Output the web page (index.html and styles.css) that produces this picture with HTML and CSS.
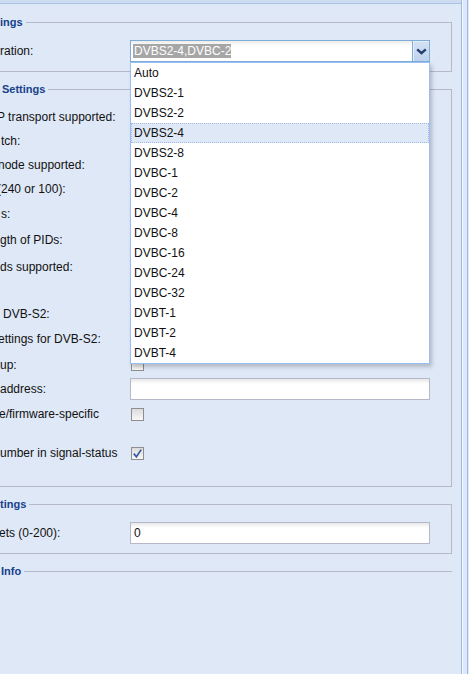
FILE: index.html
```html
<!DOCTYPE html>
<html>
<head>
<meta charset="utf-8">
<title>Settings</title>
<link rel="stylesheet" href="styles.css">
</head>
<body>
<div class="page">
  <div class="main">
    <div class="topbar"></div>

    <fieldset class="fs fs-first">
      <legend>ings</legend>
      <div class="row h22">
        <span class="lbl">ration:</span>
        <div class="combo">
          <div class="combo-input"><span class="sel">DVBS2-4,DVBC-2</span></div>
          <div class="trigger">
            <svg width="11" height="7" viewBox="0 0 11 7"><polyline points="1.2,1.3 5.5,5.2 9.8,1.3" fill="none" stroke="#263f72" stroke-width="2.4"/></svg>
          </div>
          <ul class="combo-list">
            <li>Auto</li>
            <li>DVBS2-1</li>
            <li>DVBS2-2</li>
            <li class="on">DVBS2-4</li>
            <li>DVBS2-8</li>
            <li>DVBC-1</li>
            <li>DVBC-2</li>
            <li>DVBC-4</li>
            <li>DVBC-8</li>
            <li>DVBC-16</li>
            <li>DVBC-24</li>
            <li>DVBC-32</li>
            <li>DVBT-1</li>
            <li>DVBT-2</li>
            <li>DVBT-4</li>
          </ul>
        </div>
      </div>
    </fieldset>

    <fieldset class="fs fs-big">
      <legend class="lg-pad">Settings</legend>
      <div class="row h24"><span class="lbl c3">P transport supported:</span></div>
      <div class="row h24"><span class="lbl p1">tch:</span></div>
      <div class="row h24"><span class="lbl c2">node supported:</span></div>
      <div class="row h24"><span class="lbl c3">(240 or 100):</span></div>
      <div class="row h26"><span class="lbl p1">s:</span></div>
      <div class="row h26"><span class="lbl">gth of PIDs:</span></div>
      <div class="row h28"><span class="lbl">ds supported:</span></div>
      <div class="spacer h20"></div>
      <div class="row h26"><span class="lbl p3">DVB-S2:</span></div>
      <div class="row h24"><span class="lbl c2">ettings for DVB-S2:</span></div>
      <div class="row h27"><span class="lbl">up:</span><span class="cb"></span></div>
      <div class="row h22"><span class="lbl">address:</span><div class="text"></div></div>
      <div class="row h28"><span class="lbl c1">e/firmware-specific</span><span class="cb"></span></div>
      <div class="spacer h12"></div>
      <div class="row h26"><span class="lbl">umber in signal-status</span><span class="cb">
        <svg width="11" height="11" viewBox="0 0 11 11"><polyline points="1.8,5.6 4.4,8.8 9.2,1.6" fill="none" stroke="#3a58a6" stroke-width="1.7"/></svg>
      </span></div>
    </fieldset>

    <fieldset class="fs">
      <legend>tings</legend>
      <div class="row h22">
        <span class="lbl c1">ets (0-200):</span>
        <div class="text">0</div>
      </div>
    </fieldset>

    <fieldset class="fs fs-collapsed">
      <legend class="lg-pad">Info</legend>
    </fieldset>
  </div>
  <div class="edge"></div>
</div>
</body>
</html>
```

FILE: styles.css
```css
html, body {
  margin: 0;
  padding: 0;
}
body {
  background: #dfe8f6;
  font-family: "Liberation Sans", Arial, sans-serif;
  font-size: 12px;
  color: #000;
  overflow: hidden;
}
.page {
  display: flex;
  width: 469px;
  height: 674px;
  overflow: hidden;
}
.main {
  width: 461px;
  flex: none;
  background: #dfe8f6;
}
.edge {
  width: 5px;
  flex: none;
  border-left: 1px solid #99bbe8;
  border-right: 1px solid #99bbe8;
  box-shadow: inset 1px 0 0 #f3f6fc;
  background: #dfe8f6;
}
.topbar {
  height: 3px;
  background: #cddcf1;
  border-bottom: 1px solid #a9c3e8;
}

/* fieldsets */
.fs {
  margin: 0 9px 10px -11px;
  padding: 11px 0 9px 10px;
  border: 1px solid #b5b8c8;
  min-width: 0;
}
.fs-first {
  margin-top: 11px;
}
.fs-big {
  padding-top: 9px;
  padding-bottom: 20px;
}
.fs-collapsed {
  border-width: 1px 0 0 0;
  padding: 0 0 0 10px;
}
.fs legend {
  font-family: "Liberation Sans", Arial, sans-serif;
  font-weight: bold;
  font-size: 11px;
  line-height: 14px;
  color: #15428b;
  padding: 0 3px 0 0;
  margin: 0;
}
.fs legend.lg-pad {
  padding-left: 2px;
}

/* rows */
.row {
  display: flex;
  align-items: center;
}
.h12 { height: 12px; }
.h20 { height: 20px; }
.h22 { height: 22px; }
.h24 { height: 24px; }
.h26 { height: 26px; }
.h27 { height: 27px; }
.h28 { height: 28px; }

.lbl {
  width: 130px;
  flex: none;
  white-space: nowrap;
  overflow: hidden;
  line-height: 14px;
  color: #111;
}
.c1 { text-indent: -1px; }
.c2 { text-indent: -2px; }
.c3 { text-indent: -3px; }
.p1 { padding-left: 1px; box-sizing: border-box; }
.p3 { padding-left: 3px; box-sizing: border-box; }

/* combo */
.combo {
  position: relative;
  width: 300px;
  height: 22px;
  display: flex;
}
.combo-input {
  flex: 1;
  border: 1px solid #7eadd9;
  border-right: 0;
  background: linear-gradient(#ececec, #ffffff 5px);
  padding-left: 2px;
  display: flex;
  align-items: center;
}
.sel {
  background: #a6a6a6;
  color: #fff;
  line-height: 14px;
  padding-left: 1px;
}
.trigger {
  width: 16px;
  border: 1px solid #7eadd9;
  background: linear-gradient(#d4e2f4, #bfd2ec);
  box-shadow: inset 1px 1px 0 #e6eefa;
  display: flex;
  align-items: center;
  justify-content: center;
}
.combo-list {
  position: absolute;
  top: 100%;
  left: 0;
  width: 300px;
  box-sizing: border-box;
  margin: 0;
  padding: 0;
  list-style: none;
  background: #fff;
  border: 1px solid #98c0f4;
  box-shadow: 2px 3px 4px rgba(0, 0, 0, 0.2);
  z-index: 5;
}
.combo-list li {
  height: 20px;
  box-sizing: border-box;
  border: 1px solid #fff;
  padding: 0 2px;
  line-height: 18px;
  color: #111;
  white-space: nowrap;
}
.combo-list li.on {
  background: #dfe8f6;
  border: 1px dotted #a3bae9;
}

/* text field */
.text {
  width: 300px;
  height: 22px;
  box-sizing: border-box;
  border: 1px solid #b5b8c8;
  background: linear-gradient(#e8e8e8, #ffffff 5px);
  padding: 0 3px;
  display: flex;
  align-items: center;
  color: #111;
}

/* checkbox */
.cb {
  width: 13px;
  height: 13px;
  box-sizing: border-box;
  margin-left: 1px;
  border: 1px solid #8e8e8e;
  background: linear-gradient(#dcdcdc, #f8f8f8);
  display: flex;
  align-items: center;
  justify-content: center;
}
```
